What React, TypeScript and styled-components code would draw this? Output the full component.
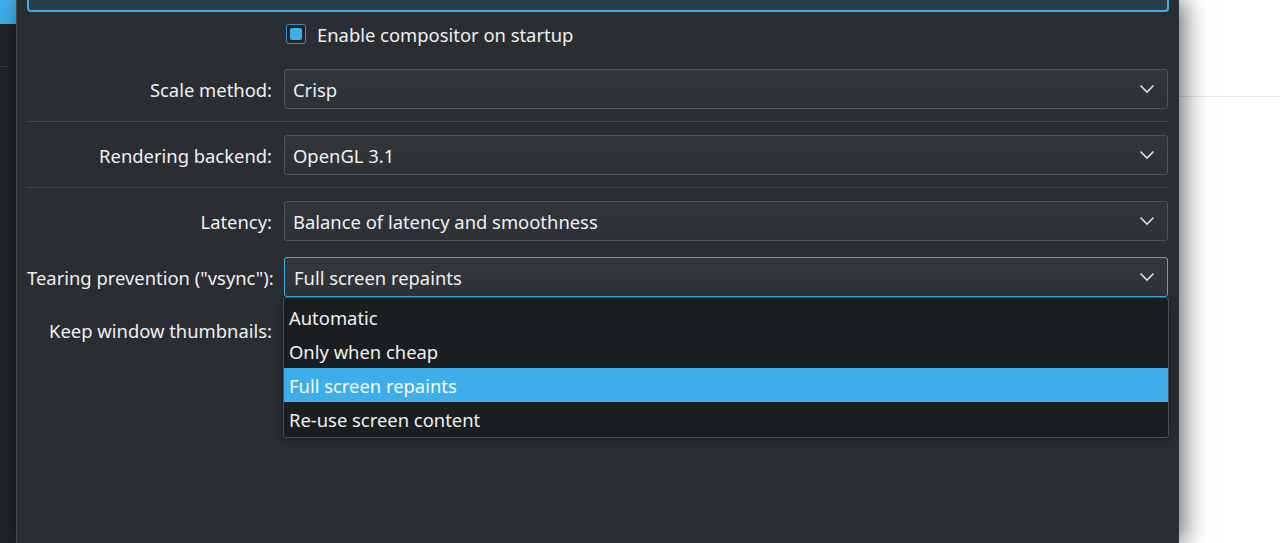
import React from "react";
import styled, { createGlobalStyle } from "styled-components";

const Global = createGlobalStyle`
  html, body { margin: 0; padding: 0; background: #ffffff; }
  body { font-family: "Noto Sans", "Open Sans", sans-serif; overflow: hidden; }
  #root { width: 1280px; height: 543px; overflow: hidden; }
`;

const Screen = styled.div`
  display: flex;
  width: 1280px;
  height: 543px;
  overflow: hidden;
`;

const SideStrip = styled.div`
  width: 16px;
  flex: none;
  background: #1f2226;
  display: flex;
  flex-direction: column;
`;

const SideActive = styled.div`
  height: 24px;
  background: #3daee9;
`;

const SideRule = styled.div`
  margin-top: 42px;
  width: 8px;
  height: 1px;
  background: #3a3e43;
`;

const Dialog = styled.div`
  position: relative;
  z-index: 2;
  width: 1163px;
  flex: none;
  background: #2a2e32;
  border-left: 1px solid #44494e;
  box-shadow: 6px 0 22px rgba(0, 0, 0, 0.55);
  padding: 0 10px 0 10px;
  box-sizing: border-box;
  display: flex;
  flex-direction: column;
  color: #eff0f1;
  font-size: 18.4px;
`;

const TopBox = styled.div`
  margin-top: -30px;
  height: 38px;
  border: 2px solid #3daee9;
  border-radius: 4px;
  background: #2d3d4a;
`;

const Form = styled.div`
  position: relative;
  display: grid;
  grid-template-columns: 245px 884px;
  column-gap: 12px;
  align-items: center;
`;

const Label = styled.div`
  text-align: right;
  white-space: nowrap;
  color: #eff0f1;
`;

const Row = styled.div<{ $mt: number }>`
  grid-column: 1 / -1;
  display: grid;
  grid-template-columns: 245px 884px;
  column-gap: 12px;
  align-items: center;
  margin-top: ${(p) => p.$mt}px;
`;

const CheckRow = styled.label`
  grid-column: 2;
  display: flex;
  align-items: center;
  gap: 11px;
  padding-left: 2px;
  height: 22px;
  margin-top: 11px;
`;

const CheckBox = styled.span`
  width: 18px;
  height: 18px;
  border: 1px solid #3a8cb8;
  border-radius: 3px;
  background: #232629;
  display: flex;
  align-items: center;
  justify-content: center;
  flex: none;
`;

const CheckFill = styled.span`
  width: 12px;
  height: 12px;
  border-radius: 2px;
  background: #3daee9;
`;

const Combo = styled.div<{ $focused?: boolean }>`
  height: 40px;
  box-sizing: border-box;
  border: 1px solid ${(p) => (p.$focused ? "#3daee9" : "#4f5459")};
  border-radius: 3px;
  background: ${(p) =>
    p.$focused
      ? "linear-gradient(#33383d, #2e3237)"
      : "linear-gradient(#31363b, #2d3136)"};
  display: flex;
  align-items: center;
  justify-content: space-between;
  padding: 0 12px 0 ${(p) => (p.$focused ? 9 : 8)}px;
  color: #eff0f1;
`;

const Separator = styled.div<{ $mt: number }>`
  grid-column: 1 / -1;
  height: 1px;
  background: #45494e;
  margin-top: ${(p) => p.$mt}px;
`;

const Popup = styled.div`
  position: absolute;
  left: 256px;
  top: 285px;
  width: 886px;
  box-sizing: border-box;
  background: #1b1e20;
  border: 1px solid #4b5055;
  border-radius: 3px;
  padding: 2px 0 1px;
  box-shadow: 0 3px 10px rgba(0, 0, 0, 0.35);
  z-index: 5;
`;

const Item = styled.div<{ $active?: boolean }>`
  height: 34px;
  display: flex;
  align-items: center;
  padding-left: 5px;
  background: ${(p) => (p.$active ? "#3daee9" : "transparent")};
  color: ${(p) => (p.$active ? "#fcfcfc" : "#eff0f1")};
`;

const RightPane = styled.div`
  flex: 1;
  background: #ffffff;
  display: flex;
  flex-direction: column;
`;

const RightRule = styled.div`
  margin-top: 96px;
  height: 1px;
  background: #e6e6e6;
`;

const Chevron = () => (
  <svg width="16" height="10" viewBox="0 0 16 10">
    <path d="M1.5 1.5 L8 8 L14.5 1.5" fill="none" stroke="#dcdde0" strokeWidth="1.6" />
  </svg>
);

export default function App() {
  return (
    <Screen>
      <Global />
      <SideStrip>
        <SideActive />
        <SideRule />
      </SideStrip>
      <Dialog>
        <TopBox />
        <Form>
          <CheckRow>
            <CheckBox>
              <CheckFill />
            </CheckBox>
            <span>Enable compositor on startup</span>
          </CheckRow>

          <Row $mt={24}>
            <Label>Scale method:</Label>
            <Combo>
              <span>Crisp</span>
              <Chevron />
            </Combo>
          </Row>

          <Separator $mt={12} />

          <Row $mt={13}>
            <Label>Rendering backend:</Label>
            <Combo>
              <span>OpenGL 3.1</span>
              <Chevron />
            </Combo>
          </Row>

          <Separator $mt={12} />

          <Row $mt={13}>
            <Label>Latency:</Label>
            <Combo>
              <span>Balance of latency and smoothness</span>
              <Chevron />
            </Combo>
          </Row>

          <Row $mt={16}>
            <Label>Tearing prevention ("vsync"):</Label>
            <Combo $focused>
              <span>Full screen repaints</span>
              <Chevron />
            </Combo>
          </Row>

          <Row $mt={13}>
            <Label>Keep window thumbnails:</Label>
            <Combo />
          </Row>

          <Popup>
            <Item>Automatic</Item>
            <Item>Only when cheap</Item>
            <Item $active>Full screen repaints</Item>
            <Item>Re-use screen content</Item>
          </Popup>
        </Form>
      </Dialog>
      <RightPane>
        <RightRule />
      </RightPane>
    </Screen>
  );
}
